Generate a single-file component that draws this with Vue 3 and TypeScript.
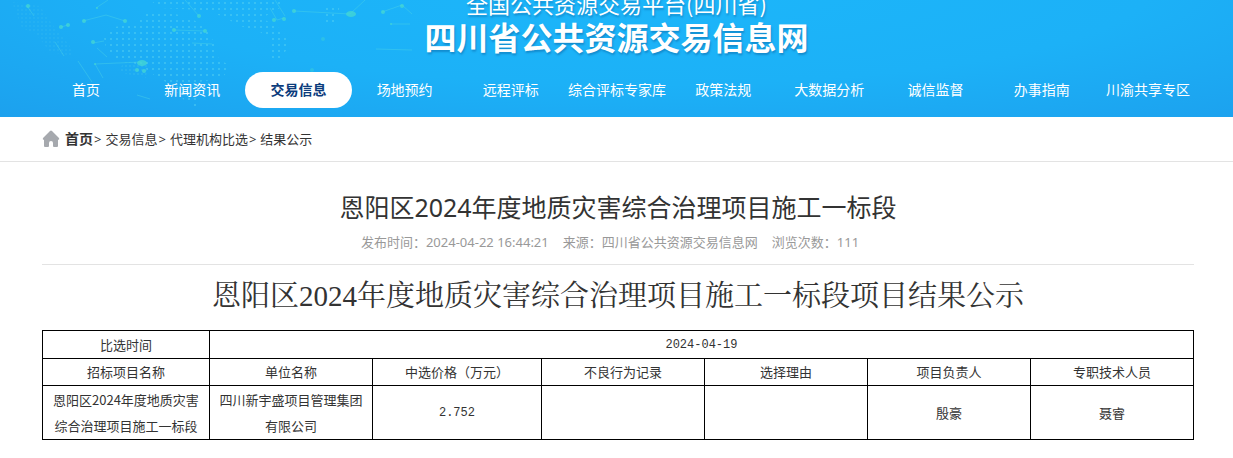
<script setup lang="ts">
interface NavItem {
  label: string
  active?: boolean
}

const navItems: NavItem[] = [
  { label: '首页' },
  { label: '新闻资讯' },
  { label: '交易信息', active: true },
  { label: '场地预约' },
  { label: '远程评标' },
  { label: '综合评标专家库' },
  { label: '政策法规' },
  { label: '大数据分析' },
  { label: '诚信监督' },
  { label: '办事指南' },
  { label: '川渝共享专区' },
]

const crumbs: string[] = ['交易信息', '代理机构比选', '结果公示']

const columns: string[] = [
  '招标项目名称',
  '单位名称',
  '中选价格（万元）',
  '不良行为记录',
  '选择理由',
  '项目负责人',
  '专职技术人员',
]

const rows: string[][] = [
  ['恩阳区2024年度地质灾害综合治理项目施工一标段', '四川新宇盛项目管理集团有限公司', '2.752', '', '', '殷豪', '聂睿'],
]

const isNumeric = (value: string): boolean => /^[\d.-]+$/.test(value)
</script>

<template>
  <div class="page">
    <header class="banner">
      <svg class="network" width="430" height="117" viewBox="0 0 430 117" aria-hidden="true">
        <defs>
          <pattern id="dots" width="6" height="6" patternUnits="userSpaceOnUse">
            <circle cx="3" cy="3" r="1" fill="#5fd8f2" />
          </pattern>
          <pattern id="fine" width="4" height="4" patternUnits="userSpaceOnUse">
            <circle cx="2" cy="2" r="0.7" fill="#4fccee" />
          </pattern>
        </defs>
        <g opacity="0.55">
          <path d="M104 38L114 27L136 24L145 14L168 12L190 18L204 26L214 42L219 60L232 66L222 78L200 82L196 108L184 100L170 84L158 78L142 66L116 58L106 48Z" fill="url(#dots)" />
          <path d="M150 0H282L280 8L262 18L282 30L290 44L280 60L268 58L272 40L260 32L240 26L222 16L200 10L160 8Z" fill="url(#dots)" />
          <path d="M322 4H340L336 24H324Z" fill="url(#dots)" />
          <path d="M12 2L40 6L52 24L70 46L72 56L50 52L36 34L22 28Z" fill="url(#fine)" opacity="0.7" />
          <path d="M124 62L148 64L146 78L118 72Z" fill="url(#fine)" />
        </g>
        <g fill="none" stroke="#4fd6e4" stroke-width="1" opacity="0.4">
          <path d="M83 21L106 15L125 21M96 8L108 0M185 0L199 16M61 27L68 25M27 6L34 16M93 43L104 41M97 48L107 57M95 64L141 62M95 64L103 78M78 61L92 82M174 30L205 31M192 43L212 44M270 8L277 20L284 18M275 0L285 16M294 11L350 14L365 0M382 12L402 5L412 14M391 24L410 24M376 49L412 50M55 42L64 56M137 95L150 99" />
        </g>
        <g fill="#46d8d2" opacity="0.75">
          <circle cx="84" cy="21" r="2" />
          <circle cx="125" cy="21" r="2" />
          <circle cx="97" cy="8" r="1" />
          <circle cx="28" cy="6" r="2" />
          <circle cx="61" cy="27" r="2" />
          <circle cx="68" cy="25" r="2" />
          <circle cx="93" cy="42" r="2" />
          <circle cx="199" cy="16" r="2" />
          <circle cx="174" cy="30" r="2" />
          <circle cx="205" cy="31" r="2" />
          <ellipse cx="142" cy="63" rx="5" ry="3" />
          <circle cx="95" cy="64" r="1" />
          <circle cx="137" cy="70" r="2" />
          <circle cx="144" cy="71" r="2" />
          <circle cx="274" cy="20" r="2" />
          <circle cx="284" cy="19" r="2" />
          <circle cx="294" cy="11" r="2" />
          <ellipse cx="351" cy="14" rx="5" ry="3" />
          <circle cx="383" cy="12" r="2" />
          <circle cx="402" cy="6" r="2" />
          <circle cx="391" cy="24" r="1" />
          <circle cx="323" cy="39" r="2" opacity="0.5" />
          <circle cx="312" cy="70" r="2" opacity="0.5" />
        </g>
      </svg>
      <div class="brand">
        <p class="platform">全国公共资源交易平台(四川省)</p>
        <p class="site">四川省公共资源交易信息网</p>
      </div>
      <nav class="nav">
        <a
          v-for="item in navItems"
          :key="item.label"
          href="#"
          class="nav-item"
          :class="{ active: item.active }"
        >{{ item.label }}</a>
      </nav>
    </header>

    <nav class="crumbs" aria-label="当前位置">
      <svg class="home" width="18" height="18" viewBox="0 0 18 18" aria-hidden="true">
        <path d="M8 1Q9 0 10 1L17 8Q18 9.500 16 10V16Q16 17 15 17H12Q11 17 11 16V13Q11 11 9 11Q7 11 7 13V16Q7 17 6 17H3Q2 17 2 16V10Q0 9.500 1 8Z" fill="#a6a9ae" />
      </svg>
      <a href="#" class="crumb-home">首页</a>
      <template v-for="crumb in crumbs" :key="crumb">
        <span class="sep">&gt;</span>
        <a href="#">{{ crumb }}</a>
      </template>
    </nav>

    <main class="article">
      <h1>恩阳区2024年度地质灾害综合治理项目施工一标段</h1>
      <div class="meta">
        <span>发布时间：2024-04-22 16:44:21</span>
        <span>来源：四川省公共资源交易信息网</span>
        <span>浏览次数：111</span>
      </div>
      <h2>恩阳区2024年度地质灾害综合治理项目施工一标段项目结果公示</h2>
      <table>
        <colgroup>
          <col class="wide">
          <col>
          <col class="mid">
          <col>
          <col>
          <col>
          <col>
        </colgroup>
        <tbody>
          <tr class="date-row">
            <th scope="row">比选时间</th>
            <td colspan="6" class="num">2024-04-19</td>
          </tr>
          <tr>
            <th v-for="column in columns" :key="column" scope="col">{{ column }}</th>
          </tr>
          <tr v-for="(row, r) in rows" :key="r" class="result-row">
            <td v-for="(cell, c) in row" :key="c" :class="{ num: isNumeric(cell) }">{{ cell }}</td>
          </tr>
        </tbody>
      </table>
    </main>
  </div>
</template>

<style>
body {
  margin: 0;
  background: #fff;
}
</style>

<style scoped>
.page {
  font-family: "Noto Sans", "Noto Sans CJK SC", sans-serif;
  font-size: 13px;
  color: #333;
}

a {
  color: inherit;
  text-decoration: none;
}

.banner {
  position: relative;
  overflow: hidden;
  padding-bottom: 9px;
  background: radial-gradient(ellipse 75% 150% at 52% -10%, #1cb6fa 0%, #1cb1f7 55%, #1ca1ee 100%);
  color: #fff;
}

.network {
  position: absolute;
  top: 0;
  left: 0;
}

.brand {
  position: relative;
  margin-top: -13px;
  padding-bottom: 18px;
  font-family: "Noto Sans CJK SC", sans-serif;
  text-align: center;
  text-shadow: 1px 2px 2px rgba(0, 70, 130, 0.35);
}

.platform,
.site {
  margin: 0;
}

.platform {
  font-size: 22px;
  line-height: 32px;
}

.site {
  font-size: 32px;
  font-weight: 700;
  line-height: 35px;
}

.nav {
  position: relative;
  display: grid;
  grid-template-columns: repeat(11, 1fr);
  padding: 0 32px 0 33px;
}

.nav-item {
  border-radius: 18px;
  font-size: 14px;
  line-height: 36px;
  text-align: center;
  white-space: nowrap;
}

.nav-item.active {
  background: #fff;
  color: #0b3c7c;
  font-weight: 700;
}

.crumbs {
  display: flex;
  align-items: center;
  padding: 0 42px;
  border-bottom: 1px solid #e3e3e3;
  line-height: 44px;
}

.home {
  margin-right: 5px;
}

.crumb-home {
  font-size: 14px;
  font-weight: 700;
}

.sep {
  margin: 0 4px 0 1px;
}

.article {
  padding: 27px 39px 18px 42px;
}

h1 {
  margin: 0;
  font-size: 25px;
  font-weight: 400;
  line-height: 36px;
  text-align: center;
}

.meta {
  display: flex;
  justify-content: center;
  gap: 14px;
  padding: 7px 16px 12px 0;
  border-bottom: 1px solid #e3e3e3;
  color: #999;
  line-height: 20px;
}

h2 {
  margin: 0;
  padding: 11px 0 14px;
  font-family: "Liberation Serif", "Noto Serif CJK SC", "Noto Sans CJK SC", serif;
  font-size: 29px;
  font-weight: 400;
  line-height: 40px;
  text-align: center;
}

table {
  width: 100%;
  border-collapse: collapse;
  table-layout: fixed;
  font-family: "Noto Sans CJK SC", sans-serif;
  line-height: 26px;
}

.date-row {
  height: 28px;
}

.result-row {
  height: 54px;
}

col.wide {
  width: 14.5%;
}

col.mid {
  width: 14.7%;
}

th,
td {
  padding: 0 5px;
  border: 1px solid #000;
  font-weight: 400;
  text-align: center;
}

td.num {
  font-family: "Liberation Mono", monospace;
  font-size: 12px;
}
</style>
